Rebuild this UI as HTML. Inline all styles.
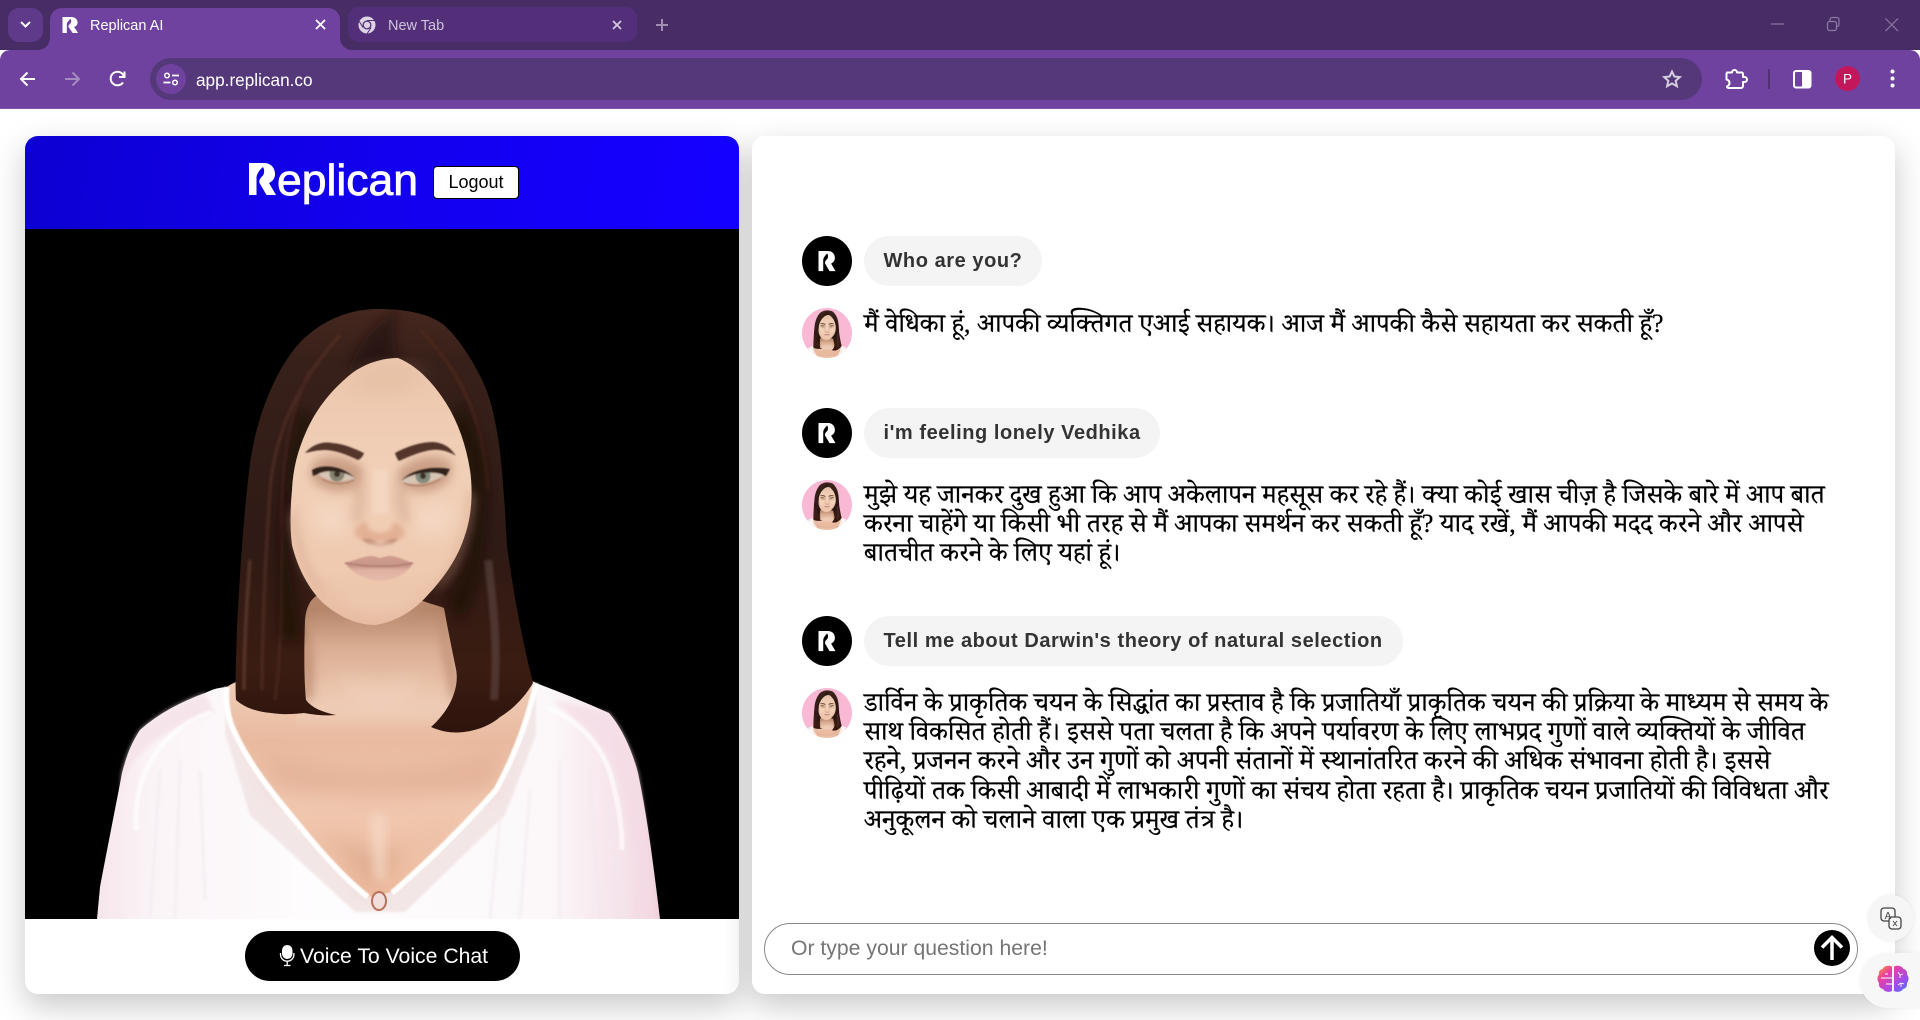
<!DOCTYPE html>
<html lang="hi">
<head>
<meta charset="utf-8">
<title>Replican AI</title>
<style>
*{box-sizing:border-box}
html,body{margin:0;padding:0;width:1920px;height:1020px;overflow:hidden;background:#fff;font-family:"Liberation Sans",sans-serif}
.a{position:absolute}
.strip{left:0;top:0;width:1920px;height:50px;background:#472c66}
.toolbar{left:0;top:50px;width:1920px;height:59px;background:#6f42a0;border-radius:10px 10px 0 0;border-bottom:1px solid #7d52ab}
.tab1{left:50px;top:8px;width:290px;height:42px;background:#6f42a0;border-radius:12px 12px 0 0}
.tab2{left:348px;top:7px;width:289px;height:35px;background:#532f7a;border-radius:11px}
.chev{left:8px;top:8px;width:35px;height:34px;background:#5f3a8b;border-radius:11px}
.tabt{font-size:14.5px;line-height:18px;white-space:nowrap}
.omni{left:150px;top:58px;width:1552px;height:42px;background:#55387a;border-radius:21px}
.tune{left:156px;top:64px;width:30px;height:30px;background:#6f42a0;border-radius:50%}
.url{left:196px;top:70px;font-size:17.2px;line-height:20px;color:#fff;white-space:nowrap}
.card{background:#fff;border-radius:13px;box-shadow:0 12px 32px rgba(0,0,0,.22)}
.head{left:25px;top:136px;width:714px;height:93px;background:linear-gradient(100deg,#0c00d2 0%,#1300ee 50%,#1400ff 100%);border-radius:13px 13px 0 0}
.logout{left:433px;top:166px;width:86px;height:33px;background:#fff;border:1px solid #000;border-radius:4px;font-size:18px;line-height:31px;text-align:center;color:#000}
.voice{left:245px;top:931px;width:275px;height:50px;background:#000;border-radius:25px;color:#fff;font-size:21.2px;line-height:52px;padding-left:55px;white-space:nowrap}
.bub{left:864px;height:50px;background:#f4f4f4;border-radius:25px;font-weight:700;font-size:20px;line-height:50px;color:#333;letter-spacing:.56px;padding-left:19.5px;white-space:nowrap}
.hi{left:864px;font-family:"Liberation Serif","Noto Serif Devanagari","Noto Sans Devanagari",serif;font-size:26.3px;line-height:29.2px;color:#000;white-space:nowrap;-webkit-text-stroke:.25px #000}
.input{left:764px;top:923px;width:1094px;height:52px;border:1px solid #888;border-radius:26px;background:#fff;font-size:21.2px;line-height:50px;color:#757575;padding-left:26px}
.trans{left:1868px;top:895px;width:46px;height:46px;border-radius:50%;background:#f6f6f6;box-shadow:0 0 3px rgba(0,0,0,.08)}
.brain{left:1860px;top:953px;width:70px;height:55px;border-radius:28px 0 0 28px;background:#f7f7f7;box-shadow:0 0 3px rgba(0,0,0,.06)}
svg{position:absolute;overflow:hidden}
</style>
</head>
<body>
<div class="a strip"></div>
<div class="a toolbar"></div>
<div class="a chev"></div>
<div class="a tab1"></div>
<div class="a tab2"></div>
<div class="a tabt" style="left:90px;top:17px;color:#fff">Replican AI</div>
<div class="a tabt" style="left:388px;top:17px;color:#cfc4dc">New Tab</div>
<div class="a omni"></div>
<div class="a tune"></div>
<div class="a url">app.replican.co</div>

<div class="a card" style="left:25px;top:136px;width:714px;height:858px"></div>
<div class="a card" style="left:752px;top:136px;width:1143px;height:858px"></div>
<div class="a head"></div>
<div class="a logout">Logout</div>
<div class="a voice">Voice To Voice Chat</div>

<div class="a bub" style="top:236px;width:178px">Who are you?</div>
<div class="a bub" style="top:408px;width:296px">i'm feeling lonely Vedhika</div>
<div class="a bub" style="top:616px;width:539px">Tell me about Darwin's theory of natural selection</div>

<div class="a hi" style="top:309px">मैं वेधिका हूं, आपकी व्यक्तिगत एआई सहायक। आज मैं आपकी कैसे सहायता कर सकती हूँ?</div>
<div class="a hi" style="top:480px">मुझे यह जानकर दुख हुआ कि आप अकेलापन महसूस कर रहे हैं। क्या कोई खास चीज़ है जिसके बारे में आप बात<br>करना चाहेंगे या किसी भी तरह से मैं आपका समर्थन कर सकती हूँ? याद रखें, मैं आपकी मदद करने और आपसे<br>बातचीत करने के लिए यहां हूं।</div>
<div class="a hi" style="top:688px">डार्विन के प्राकृतिक चयन के सिद्धांत का प्रस्ताव है कि प्रजातियाँ प्राकृतिक चयन की प्रक्रिया के माध्यम से समय के<br>साथ विकसित होती हैं। इससे पता चलता है कि अपने पर्यावरण के लिए लाभप्रद गुणों वाले व्यक्तियों के जीवित<br>रहने, प्रजनन करने और उन गुणों को अपनी संतानों में स्थानांतरित करने की अधिक संभावना होती है। इससे<br>पीढ़ियों तक किसी आबादी में लाभकारी गुणों का संचय होता रहता है। प्राकृतिक चयन प्रजातियों की विविधता और<br>अनुकूलन को चलाने वाला एक प्रमुख तंत्र है।</div>

<div class="a input">Or type your question here!</div>
<div class="a trans"></div>
<div class="a brain"></div>

<svg class="a" style="left:0;top:0" width="1920" height="1020" viewBox="0 0 1920 1020" xmlns="http://www.w3.org/2000/svg">
<defs>
<clipPath id="stage"><rect x="25" y="229" width="714" height="690"/></clipPath>
<clipPath id="av1"><circle cx="827" cy="333" r="25"/></clipPath>
<clipPath id="av2"><circle cx="827" cy="505" r="25"/></clipPath>
<clipPath id="av3"><circle cx="827" cy="713" r="25"/></clipPath>
<clipPath id="eyeL"><path d="M318 474C328 467 344 468 355 478C344 483 328 483 318 474Z"/></clipPath>
<clipPath id="eyeR"><path d="M401 481C412 470 430 469 444 475C432 484 412 486 401 481Z"/></clipPath>
<filter id="b05" x="-20%" y="-40%" width="140%" height="180%"><feGaussianBlur stdDeviation=".7"/></filter>
<filter id="b2" x="-30%" y="-30%" width="160%" height="160%"><feGaussianBlur stdDeviation="2"/></filter>
<filter id="b1" x="-30%" y="-30%" width="160%" height="160%"><feGaussianBlur stdDeviation="1.2"/></filter>
<filter id="b5" x="-40%" y="-40%" width="180%" height="180%"><feGaussianBlur stdDeviation="5"/></filter>
<filter id="b10" x="-60%" y="-60%" width="220%" height="220%"><feGaussianBlur stdDeviation="10"/></filter>
<linearGradient id="hair" gradientUnits="userSpaceOnUse" x1="0" y1="309" x2="0" y2="732"><stop offset="0" stop-color="#45281f"/><stop offset=".12" stop-color="#38201a"/><stop offset=".55" stop-color="#2f1a15"/><stop offset=".85" stop-color="#3a1c12"/><stop offset="1" stop-color="#2e140c"/></linearGradient>
<linearGradient id="face" x1="0" y1="0" x2="0" y2="1"><stop offset="0" stop-color="#ebc6ac"/><stop offset=".4" stop-color="#f1cfb7"/><stop offset=".8" stop-color="#efc9b0"/><stop offset="1" stop-color="#e6ba9f"/></linearGradient>
<linearGradient id="neck" gradientUnits="userSpaceOnUse" x1="0" y1="610" x2="0" y2="728"><stop offset="0" stop-color="#b5866a"/><stop offset=".3" stop-color="#d8ac91"/><stop offset=".65" stop-color="#eac3ab"/><stop offset=".85" stop-color="#efcdb8" stop-opacity=".8"/><stop offset="1" stop-color="#efcdb8" stop-opacity="0"/></linearGradient>
<linearGradient id="chest" gradientUnits="userSpaceOnUse" x1="0" y1="680" x2="0" y2="900"><stop offset="0" stop-color="#efcdb8"/><stop offset=".28" stop-color="#e9ba9f"/><stop offset=".55" stop-color="#f0c8b0"/><stop offset="1" stop-color="#eebc9f"/></linearGradient>
<linearGradient id="shirt" x1="0" y1="0" x2="1" y2="0"><stop offset="0" stop-color="#f6e6ec"/><stop offset=".1" stop-color="#fbf4f7"/><stop offset=".4" stop-color="#fefdfe"/><stop offset=".8" stop-color="#fcf8fa"/><stop offset=".95" stop-color="#f5e0e8"/><stop offset="1" stop-color="#efd0db"/></linearGradient>
<linearGradient id="lip" x1="0" y1="0" x2="0" y2="1"><stop offset="0" stop-color="#cf9c8c"/><stop offset=".42" stop-color="#c8958a"/><stop offset=".55" stop-color="#dfb0a0"/><stop offset="1" stop-color="#e6bcab"/></linearGradient>
<path id="Rm" d="M0 0H15C22 0 26 5 26 11C26 15.500 23.500 18.500 20 20L27 32H17.500L10.500 20C9.500 17 12 14.500 14 12.500C15.500 10 15.500 6.500 14 4C11.500 6 8 10 7.500 14V32H0Z"/>
<g id="woman">
  <!-- shirt -->
  <path fill="url(#shirt)" d="M227 687C215 688 212 690 205 693C180 702 158 714 140 730C130 745 126 758 122 773C114 815 107 850 100 887L97 919H660C654 870 648 820 638 773C632 750 622 728 609 713C585 702 560 692 536 683Z"/>
  <path fill="#f3dfe6" opacity=".7" filter="url(#b2)" d="M205 693C180 702 158 714 140 730C130 745 126 758 122 773L120 790C128 760 150 735 215 713Z"/>
  <path fill="#f5dbe5" opacity=".7" filter="url(#b2)" d="M553 700L609 713C622 728 632 750 638 773C645 810 650 860 655 919H636C634 870 630 800 610 760C595 735 575 718 553 700Z"/>
  <path fill="none" stroke="#fff" stroke-width="5" opacity=".65" filter="url(#b05)" d="M212 712C180 722 155 745 142 780C136 800 136 815 136 830"/>
  <path fill="none" stroke="#fff" stroke-width="5" opacity=".65" filter="url(#b05)" d="M548 708C580 722 603 745 612 780C620 810 622 830 622 850"/>
  <g fill="none" stroke="#f0e8ee" stroke-width="3" opacity=".6" filter="url(#b1)">
    <path d="M160 770L150 919M180 760L175 919M200 770L205 900M590 770L600 919M560 760L560 919M530 790L520 919M500 820L490 919M610 800L625 919"/>
  </g>
  <path fill="#f3e6e6" filter="url(#b1)" d="M227 690L225 733L250 815L355 912H405L505 815L536 735L536 690Z"/>
  <!-- skin -->
  <path fill="url(#chest)" d="M227 687C225 700 228 720 235 733C250 765 270 790 289 813C315 845 340 875 368 897L392 892C430 860 465 825 496 790C515 755 528 720 536 683C500 660 260 660 227 687Z"/>
  <path fill="url(#neck)" d="M296 590H466V728H296Z"/>
  <path fill="#f9dfd0" opacity=".6" filter="url(#b10)" d="M345 672C360 695 400 695 415 672C420 708 340 708 345 672Z"/>
  <path fill="#ab795e" opacity=".6" filter="url(#b5)" d="M304 610C312 640 316 670 312 700L300 700ZM442 610C440 640 445 670 452 700L462 700Z"/>
  <path fill="#d99f82" opacity=".4" filter="url(#b10)" d="M262 752C320 775 440 775 500 750L495 790C440 800 330 800 275 790Z"/>
  <path fill="#d29a7c" opacity=".5" filter="url(#b10)" d="M315 830C345 850 360 875 372 893C385 870 410 850 445 820C410 860 395 845 378 855C360 845 340 840 315 830Z"/>
  <path fill="#f7dccc" opacity=".75" filter="url(#b5)" d="M371 815L385 815L385 880L375 880Z"/>
  <path fill="none" stroke="#fff" stroke-width="5.500" filter="url(#b05)" d="M227 687C225 700 228 720 235 733C250 765 270 790 289 813C315 845 340 875 368 897"/>
  <path fill="none" stroke="#fff" stroke-width="5.500" filter="url(#b05)" d="M392 893C430 860 465 825 496 790C515 755 528 720 536 683"/>
  <ellipse cx="379" cy="901" rx="7" ry="9" fill="#f2dedd" stroke="#b8725a" stroke-width="2"/>
  <!-- hair -->
  <path fill="url(#hair)" d="M377 309C345 309 312 325 292 352C270 382 255 425 250 464C244 510 240 570 237 628C236 660 235 685 236 700C245 708 258 712 271 713C285 715 296 714 304 713C315 715 326 716 336 715C322 712 312 708 306 700C304 680 304 650 305 620C306 608 310 600 316 596L420 600C430 604 440 606 444 608C448 630 452 650 456 669C460 690 448 712 431 727C445 733 455 733 464 732C480 730 492 724 500 717C515 708 526 695 533 683C522 640 513 590 507 546C505 510 503 475 499 444C494 410 488 390 479 374C468 352 455 335 444 325C428 313 405 309 377 309Z"/>
  <path fill="#1e0e09" opacity=".55" filter="url(#b5)" d="M400 310C392 320 392 345 400 362C380 362 360 368 345 380C355 345 375 320 400 310Z"/>
  <g fill="none" stroke-width="3" filter="url(#b1)" opacity=".7">
    <path stroke="#573328" d="M340 335C300 380 275 430 270 490C266 550 262 620 262 690"/>
    <path stroke="#4f2c22" d="M310 370C285 420 280 480 282 560C282 620 280 660 275 700"/>
    <path stroke="#52291c" d="M420 330C460 370 484 420 488 490"/>
    <path stroke="#6a5350" stroke-width="8" opacity=".7" d="M488 560C494 610 498 650 494 700"/>
    <path stroke="#6b4436" d="M250 560C246 610 244 650 244 690"/>
  </g>
  <path fill="#140805" opacity=".6" filter="url(#b5)" d="M312 420C300 450 290 480 288 520C286 570 295 600 300 640L282 640C276 570 280 470 300 410ZM452 430C470 450 476 490 472 540C470 570 455 590 446 600L462 620C480 590 490 520 486 470C484 440 470 420 460 400Z"/>
  <!-- face -->
  <path fill="url(#face)" d="M398 358C378 358 358 366 344 380C326 396 314 414 306 432C298 450 293 468 292 490C290 510 290 530 292 545C298 570 310 590 322 602C340 618 358 625 375 625C395 622 412 612 426 597C444 578 458 558 465 535C472 515 473 490 470 470C466 445 458 422 446 403C434 384 418 366 398 358Z"/>
  <path fill="#cf9f84" opacity=".55" filter="url(#b5)" d="M296 500C296 540 310 575 328 596C312 590 296 560 290 520ZM468 490C468 530 455 565 432 590C452 585 472 540 474 495Z"/>
  <path fill="#d8a98e" opacity=".35" filter="url(#b10)" d="M345 385C370 368 405 365 425 375C410 392 370 394 345 385Z"/>
  <path fill="#f7e0ce" opacity=".7" filter="url(#b10)" d="M340 590C360 605 395 605 415 590C410 615 345 615 340 590ZM310 510C320 500 345 505 350 520C345 540 320 540 310 510ZM410 520C420 505 445 500 455 510C450 540 420 540 410 520Z"/>
  <path fill="#c79a82" opacity=".5" filter="url(#b5)" d="M362 470C366 490 364 510 358 525L352 520C356 505 356 485 354 465ZM398 470C394 490 396 510 404 525L410 520C405 505 405 485 406 465Z"/>
  <path fill="#f5d9c5" opacity=".8" filter="url(#b2)" d="M373 470H387L388 515H372Z"/>
  <path fill="#b08066" opacity=".6" filter="url(#b5)" d="M313 462C330 452 350 455 362 470L355 488C340 494 320 492 310 476ZM400 472C412 455 435 452 452 462L450 478C440 494 415 494 406 488Z"/>
  <path fill="#e3b195" filter="url(#b2)" d="M354 533C358 522 366 520 380 522C396 520 402 524 405 534C402 542 390 540 380 543C370 540 358 542 354 533Z"/>
  <path fill="#f1cdb3" filter="url(#b2)" d="M368 515H392C395 525 392 532 380 533C368 532 365 525 368 515Z"/>
  <path fill="#a87660" opacity=".6" filter="url(#b1)" d="M362 539C370 537 376 542 380 544C385 542 392 537 398 539C392 545 386 547 380 547C374 547 368 545 362 539Z"/>
  <g filter="url(#b05)">
    <path fill="#52342a" d="M305 453C312 445 322 441 332 443C345 444 355 449 364 453C362 458 360 459 358 460C348 455 335 450 325 450C317 450 310 452 305 453Z"/>
    <path fill="#52342a" d="M395 453C406 447 420 442 433 442C444 443 450 447 456 456C450 452 441 449 432 450C422 451 410 456 399 461C397 459 396 456 395 453Z"/>
    <g clip-path="url(#eyeL)"><rect x="310" y="460" width="50" height="30" fill="#d6c4b4"/><circle cx="337" cy="474" r="7.500" fill="#85836f"/><circle cx="337" cy="474" r="3" fill="#3a3128"/></g>
    <g clip-path="url(#eyeR)"><rect x="396" y="460" width="55" height="30" fill="#d6c4b4"/><circle cx="423" cy="476" r="7.500" fill="#858a7e"/><circle cx="423" cy="476" r="3" fill="#3a3128"/></g>
    <path fill="#33211b" d="M312 470C322 464 342 465 355 478C344 471 328 469 318 474L313 476Z"/>
    <path fill="#33211b" d="M401 481C412 469 432 466 450 469L446 476L441 474C430 471 412 473 401 481Z"/>
    <path fill="none" stroke="#a4735c" stroke-width="1" d="M322 479C332 485 345 485 354 480M404 483C414 488 430 486 440 479"/>
  </g>
  <path fill="url(#lip)" filter="url(#b05)" d="M345 563C355 560 365 556 372 556C376 556 378 558 380 558C382 558 385 556 390 556C396 556 404 560 413 563C408 572 397 580 380 581C364 580 352 572 345 563Z"/>
  <path fill="none" stroke="#a9766a" stroke-width="1.200" filter="url(#b05)" d="M345 563C358 565 370 567 380 566C392 567 402 565 413 563"/>
  <path fill="#efcab6" opacity=".7" filter="url(#b2)" d="M368 543H392L390 552H370Z"/>
</g>
<linearGradient id="br" x1="0" y1="0" x2="1" y2="1"><stop offset="0" stop-color="#f5a623"/><stop offset=".3" stop-color="#ec3fa0"/><stop offset=".7" stop-color="#9b4df0"/><stop offset="1" stop-color="#3f7df5"/></linearGradient>
</defs>

<!-- portrait -->
<rect x="25" y="229" width="714" height="690" fill="#000"/>
<g clip-path="url(#stage)"><use href="#woman"/></g>

<!-- tab strip -->
<path d="M38 50a12 12 0 0 0 12-12v12zM340 38a12 12 0 0 0 12 12h-12z" fill="#6f42a0"/>
<path d="M21 22l4.500 4.500 4.500-4.500" fill="none" stroke="#fff" stroke-width="2"/>
<use href="#Rm" fill="#fff" transform="translate(62.500 17) scale(.58 .5)"/>
<path d="M316 20l9 9M325 20l-9 9" stroke="#fff" stroke-width="1.800"/>
<circle cx="367" cy="25" r="8.500" fill="#dcd4e4"/>
<circle cx="367" cy="25" r="4.500" fill="#532f7a"/>
<circle cx="367" cy="25" r="3.200" fill="#dcd4e4"/>
<path d="M367 20.500h8M363 27.500l-4-6.500M371 27.500l-4 6.500" stroke="#532f7a" stroke-width="1"/>
<path d="M613 21l8 8M621 21l-8 8" stroke="#d2c8de" stroke-width="1.800"/>
<path d="M662 19v12M656 25h12" stroke="#a08fb5" stroke-width="2"/>
<!-- window controls -->
<path d="M1771 24h13" stroke="#8c7aa3" stroke-width="1.200"/>
<rect x="1827.500" y="21.500" width="9" height="9" rx="2" fill="none" stroke="#8c7aa3" stroke-width="1.200"/>
<path d="M1830 21v-1.500a2 2 0 0 1 2-2h5a2 2 0 0 1 2 2v5a2 2 0 0 1-2 2h-1" fill="none" stroke="#8c7aa3" stroke-width="1.200"/>
<path d="M1885.500 18.500l12.500 12.500M1898 18.500l-12.500 12.500" stroke="#8c7aa3" stroke-width="1.200"/>
<!-- nav -->
<path d="M35 79H21M27.500 72.500L21 79l6.500 6.500" fill="none" stroke="#fff" stroke-width="2"/>
<path d="M65 79h14M72.500 72.500L79 79l-6.500 6.500" fill="none" stroke="#a38cc0" stroke-width="2"/>
<path d="M123 82.500a6.800 6.800 0 1 1 .8-6.500M124.500 71.500v5.500h-5.500" fill="none" stroke="#fff" stroke-width="2"/>
<circle cx="167" cy="75.500" r="2.300" fill="none" stroke="#fff" stroke-width="1.500"/>
<path d="M172 75.500h7M163.500 82.500h7" stroke="#fff" stroke-width="1.700"/>
<circle cx="175" cy="82.500" r="2.300" fill="none" stroke="#fff" stroke-width="1.500"/>
<path d="M1672 71.500l2.300 5 5.500.6-4.100 3.700 1.200 5.400-4.900-2.800-4.900 2.800 1.200-5.400-4.100-3.700 5.500-.6z" fill="none" stroke="#d5d0dc" stroke-width="2"/>
<path d="M1727 72.500h5a2.500 2.500 0 0 1 5 0h5a2 2 0 0 1 1 2v2.500h1.500a2.500 2.500 0 0 1 0 5H1743v4a2 2 0 0 1-2 2h-12.500a1.500 1.500 0 0 1-1.500-1.500c2-1 2.500-2 2.500-3.500s-1-3-3-3.500V74z" fill="none" stroke="#fff" stroke-width="2" stroke-linejoin="round"/>
<path d="M1769 69v20" stroke="#472c66" stroke-width="1.500"/>
<rect x="1794" y="71" width="16.500" height="16.500" rx="2" fill="none" stroke="#fff" stroke-width="2"/>
<rect x="1802" y="71" width="8.500" height="16.500" fill="#fff"/>
<circle cx="1847.500" cy="78.500" r="12.500" fill="#c2185b"/>
<text x="1847.500" y="83.500" font-size="13.500" fill="#fff" text-anchor="middle" font-family="Liberation Sans">P</text>
<circle cx="1892.500" cy="71.500" r="2" fill="#fff"/><circle cx="1892.500" cy="78.500" r="2" fill="#fff"/><circle cx="1892.500" cy="85.500" r="2" fill="#fff"/>

<!-- logo -->
<use href="#Rm" fill="#fff" transform="translate(249 163)"/>
<text x="277" y="195" font-family="Liberation Sans" font-size="44" fill="#fff" stroke="#fff" stroke-width=".8" textLength="141" lengthAdjust="spacingAndGlyphs">eplican</text>

<!-- mic -->
<rect x="282" y="945" width="10.500" height="14" rx="5.200" fill="#fff"/>
<path d="M280.500 953v1.500a6.700 6.700 0 0 0 13.400 0V953M287.200 961v4M284 965.500h6.500" fill="none" stroke="#fff" stroke-width="1.300"/>

<!-- avatars user -->
<g fill="#000"><circle cx="827" cy="261" r="25"/><circle cx="827" cy="433" r="25"/><circle cx="827" cy="641" r="25"/></g>
<use href="#Rm" fill="#fff" transform="translate(818.500 251) scale(.63)"/>
<use href="#Rm" fill="#fff" transform="translate(818.500 423) scale(.63)"/>
<use href="#Rm" fill="#fff" transform="translate(818.500 631) scale(.63)"/>

<!-- avatars AI -->
<g clip-path="url(#av1)"><rect x="800" y="306" width="54" height="54" fill="#f9b9d5"/><use href="#woman" transform="translate(791 281) scale(.095)"/></g>
<g clip-path="url(#av2)"><rect x="800" y="478" width="54" height="54" fill="#f9b9d5"/><use href="#woman" transform="translate(791 453) scale(.095)"/></g>
<g clip-path="url(#av3)"><rect x="800" y="686" width="54" height="54" fill="#f9b9d5"/><use href="#woman" transform="translate(791 661) scale(.095)"/></g>

<!-- send -->
<circle cx="1832" cy="948" r="18" fill="#000"/>
<path d="M1832 960v-22M1822 947.500l10-10 10 10" fill="none" stroke="#fff" stroke-width="3.500"/>

<!-- translate icon -->
<rect x="1881" y="908" width="14" height="13" rx="3" fill="#f6f6f6" stroke="#444" stroke-width="1.300"/>
<rect x="1889" y="917" width="12" height="12" rx="3" fill="#f6f6f6" stroke="#444" stroke-width="1.300"/>
<text x="1888" y="919" font-size="10" fill="#444" text-anchor="middle" font-family="Liberation Sans">A</text>
<path d="M1893 921l4 5M1897 921l-4 5" stroke="#444" stroke-width=".9"/>

<!-- brain -->
<path fill="url(#br)" d="M1892 966.500c-3-1.500-8-1-9.500 2.500-3 .5-4 3.500-3.500 5.500-2 2-2 6 0 8.500-.5 3 1 5.500 4 6 1.500 3 6 3.500 9 2zM1894 966.500c3-1.500 8-1 9.500 2.500 3 .5 4 3.500 3.500 5.500 2 2 2 6 0 8.500 .5 3-1 5.500-4 6-1.500 3-6 3.500-9 2z"/>
<path fill="none" stroke="#fff" stroke-width=".9" d="M1881 978h11M1885 974l3 0M1886 984h6M1898 972l2 3 3-1M1900 975v3M1898 985l3-2 3 1M1901 983v4"/>
</svg>
</body>
</html>
